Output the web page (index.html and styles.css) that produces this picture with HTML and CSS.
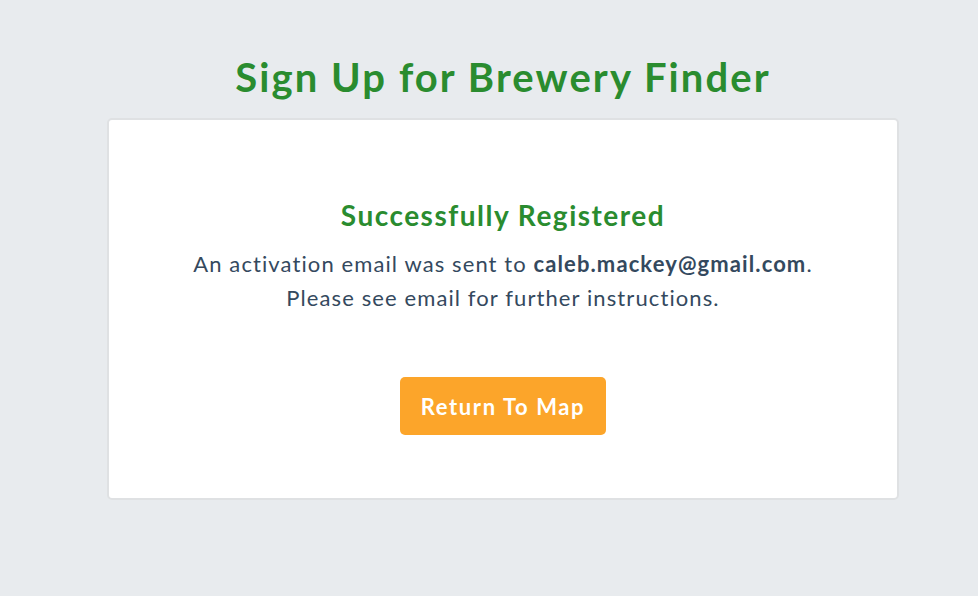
FILE: index.html
```html
<!DOCTYPE html>
<html>
<head>
<meta charset="utf-8">
<link rel="stylesheet" href="styles.css">
</head>
<body>
<div class="page">
  <h1 class="title">Sign Up for Brewery Finder</h1>
  <div class="card">
    <h2 class="card-heading">Successfully Registered</h2>
    <p class="message">An activation email was sent to <strong>caleb.mackey@gmail.com</strong>.<br>Please see email for further instructions.</p>
    <button class="btn">Return To Map</button>
  </div>
</div>
</body>
</html>
```
FILE: styles.css
```css
html, body {
  margin: 0;
  padding: 0;
  background: #e8ebee;
  height: 100%;
}
body {
  font-family: Lato, "Noto Sans", sans-serif;
  color: #34495e;
}
.page {
  display: flex;
  flex-direction: column;
  align-items: center;
  padding-left: 28px;
  padding-top: 53px;
}
.title {
  margin: 0 0 17px;
  font-size: 40px;
  line-height: 48px;
  font-weight: 700;
  letter-spacing: 2.1px;
  color: #2a8c2f;
}
.card {
  box-sizing: border-box;
  width: 792px;
  height: 382px;
  background: #fff;
  border: 2px solid #dfe1e3;
  border-radius: 5px;
  display: flex;
  flex-direction: column;
  align-items: center;
  padding-top: 78px;
}
.card-heading {
  margin: 0;
  font-size: 28px;
  line-height: 34px;
  font-weight: 700;
  letter-spacing: 1.5px;
  color: #2a8c2f;
}
.message {
  margin: 15px 0 0;
  text-align: center;
  font-size: 22px;
  line-height: 34px;
  letter-spacing: 1.1px;
}
.message strong {
  font-weight: 700;
}
.btn {
  margin-top: 62px;
  width: 206px;
  height: 58px;
  border: none;
  border-radius: 5px;
  background: #fca52a;
  color: #fff;
  font-family: inherit;
  font-size: 22px;
  font-weight: 700;
  letter-spacing: 1.6px;
  padding: 0;
  cursor: pointer;
}
```
